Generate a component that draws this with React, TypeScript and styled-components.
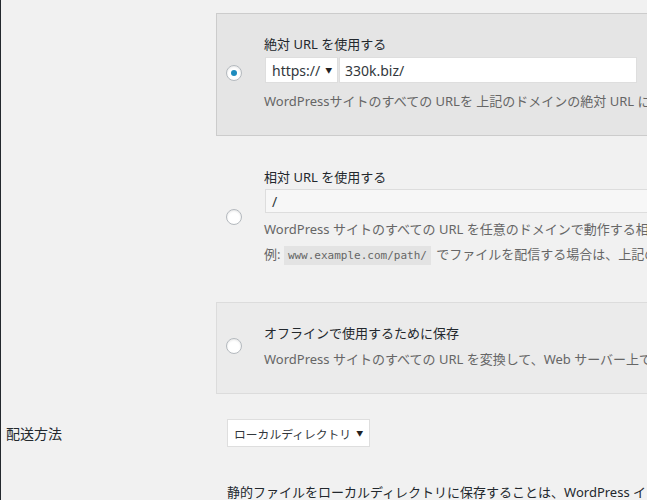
import * as React from 'react'
import styled, { createGlobalStyle } from 'styled-components'

const GlobalStyle = createGlobalStyle`
  html, body {
    margin: 0;
    padding: 0;
    background: #f1f1f1;
    overflow: hidden;
  }
  body {
    font-family: "Noto Sans", "Noto Sans CJK JP", sans-serif;
    font-size: 13px;
    color: #23282d;
  }
`

type Variant = 'selected' | 'plain' | 'muted'

const App: React.FC = () => {
  return (
    <Page>
      <GlobalStyle />
      <OptionList>
        <OptionBox $variant="selected">
          <Radio $checked />
          <OptionBody>
            <OptionTitle>絶対 URL を使用する</OptionTitle>
            <UrlRow>
              <SchemeSelect>
                https://
                <Arrow>▼</Arrow>
              </SchemeSelect>
              <UrlInput>330k.biz/</UrlInput>
            </UrlRow>
            <Description $gap={8}>
              WordPressサイトのすべての URLを 上記のドメインの絶対 URL に変換します。
            </Description>
          </OptionBody>
        </OptionBox>

        <OptionBox $variant="plain">
          <Radio />
          <OptionBody>
            <OptionTitle>相対 URL を使用する</OptionTitle>
            <PathInput>/</PathInput>
            <Description $gap={6}>
              WordPress サイトのすべての URL を任意のドメインで動作する相対 URL に変換します。
            </Description>
            <Description $gap={5}>
              例: <Code>www.example.com/path/</Code> でファイルを配信する場合は、上記のフィールドに /path/ を入力します。
            </Description>
          </OptionBody>
        </OptionBox>

        <OptionBox $variant="muted">
          <Radio />
          <OptionBody>
            <OptionTitle>オフラインで使用するために保存</OptionTitle>
            <Description $gap={6}>
              WordPress サイトのすべての URL を変換して、Web サーバー上でなくても閲覧できるようにします。
            </Description>
          </OptionBody>
        </OptionBox>
      </OptionList>

      <FormRow>
        <RowLabel>配送方法</RowLabel>
        <DeliverySelect>
          ローカルディレクトリ
          <Arrow>▼</Arrow>
        </DeliverySelect>
      </FormRow>

      <Note>
        静的ファイルをローカルディレクトリに保存することは、WordPress インストールと同じサーバー上で公開する場合に便利です。
      </Note>
    </Page>
  )
}

const Page = styled.div`
  min-height: 100vh;
  border-left: 1px solid #23282d;
  box-sizing: border-box;
  padding-top: 13px;
`

const OptionList = styled.div`
  display: flex;
  flex-direction: column;
  gap: 10px;
  margin-left: 215px;
  width: 760px;
`

const OptionBox = styled.label<{ $variant: Variant }>`
  display: flex;
  align-items: center;
  padding: 20px 0 24px 9px;
  border: 1px solid
    ${(p) =>
      p.$variant === 'selected'
        ? '#cccccc'
        : p.$variant === 'muted'
        ? '#dcdcdc'
        : 'transparent'};
  background: ${(p) =>
    p.$variant === 'selected'
      ? '#e5e5e5'
      : p.$variant === 'muted'
      ? '#ebebeb'
      : 'transparent'};
  padding-bottom: ${(p) => (p.$variant === 'plain' ? '25px' : '24px')};
`

const Radio = styled.span<{ $checked?: boolean }>`
  flex: none;
  position: relative;
  width: 16px;
  height: 16px;
  box-sizing: border-box;
  border-radius: 50%;
  border: 1px solid #b4b9be;
  background: #fff;
  box-shadow: inset 0 1px 2px rgba(0, 0, 0, 0.1);
  margin-right: 22px;
  &::after {
    content: '';
    display: ${(p) => (p.$checked ? 'block' : 'none')};
    position: absolute;
    left: 4px;
    top: 4px;
    width: 6px;
    height: 6px;
    border-radius: 50%;
    background: #1e8cbe;
  }
`

const OptionBody = styled.div`
  display: flex;
  flex-direction: column;
  min-width: 0;
  flex: 1;
`

const OptionTitle = styled.div`
  line-height: 20px;
  color: #23282d;
  white-space: nowrap;
`

const UrlRow = styled.div`
  display: flex;
  gap: 1px;
  margin-top: 3px;
  margin-left: 1px;
`

const FieldBox = styled.div`
  box-sizing: border-box;
  display: flex;
  align-items: center;
  background: #fff;
  border: 1px solid #dedede;
  font-size: 14px;
  color: #32373c;
  white-space: nowrap;
`

const SchemeSelect = styled(FieldBox)`
  width: 73px;
  height: 26px;
  padding: 0 6px;
  justify-content: space-between;
`

const UrlInput = styled(FieldBox)`
  width: 298px;
  height: 26px;
  padding: 0 5px;
`

const PathInput = styled(FieldBox)`
  margin-top: 2px;
  margin-left: 1px;
  height: 24px;
  padding: 0 6px;
  background: #f7f7f7;
  border-color: #dddddd;
  color: #32373c;
`

const Arrow = styled.span`
  font-size: 7px;
  color: #222;
  margin-left: 5px;
`

const Description = styled.div<{ $gap: number }>`
  margin-top: ${(p) => p.$gap}px;
  line-height: 20px;
  color: #666;
  white-space: nowrap;
`

const Code = styled.code`
  font-family: "DejaVu Sans Mono", "Liberation Mono", monospace;
  font-size: 11px;
  background: #e3e3e3;
  color: #666;
  padding: 3px 4px;
  margin: 0 2px 0 0;
`

const FormRow = styled.div`
  display: grid;
  grid-template-columns: 226px auto;
  align-items: center;
  margin-top: 25px;
`

const RowLabel = styled.div`
  padding-left: 5px;
  font-size: 14px;
  color: #23282d;
`

const DeliverySelect = styled(FieldBox)`
  width: 143px;
  height: 28px;
  padding: 0 7px 0 6px;
  font-size: 11.8px;
  justify-content: space-between;
`

const Note = styled.p`
  margin: 35px 0 0 226px;
  line-height: 20px;
  font-size: 13px;
  color: #23282d;
  white-space: nowrap;
`

export default App
